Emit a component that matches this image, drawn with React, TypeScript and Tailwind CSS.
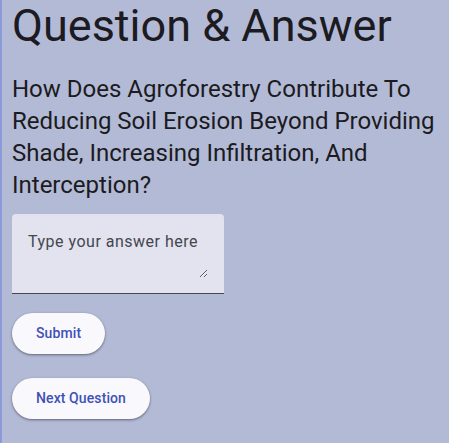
export default function App() {
  return (
    <div
      className="h-[443px] w-[449px] overflow-hidden border-l-2 border-[#8d9ad9] bg-[#b3bad6] pl-[10px] pr-3 text-[#1b1b21]"
      style={{ fontFamily: "Roboto, 'Liberation Sans', sans-serif" }}
    >
      <h1 className="text-[45px] leading-[52px] font-normal">Question &amp; Answer</h1>
      <p className="mt-[21px] text-[24px] leading-[32px]">
        How Does Agroforestry Contribute To Reducing Soil Erosion Beyond Providing
        Shade, Increasing Infiltration, And Interception?
      </p>
      <div className="mt-[13px] w-[212px] rounded-t-[4px] border-b border-[#45464f] bg-[#e2e3ee] px-4 pt-4 pb-[15px]">
        <textarea
          placeholder="Type your answer here"
          rows={2}
          className="block h-12 w-full bg-transparent text-[16px] leading-6 tracking-[0.5px] text-[#1b1b21] outline-none placeholder:text-[#45464f]"
        />
      </div>
      <div className="mt-[19px] flex flex-col items-start gap-[24px]">
        <button className="h-[41px] rounded-full bg-[#f8f8fd] px-6 text-[14px] font-medium tracking-[0.1px] text-[#3f51b5] shadow-[0_1px_3px_rgba(0,0,0,0.3),0_1px_2px_rgba(0,0,0,0.2)]">
          Submit
        </button>
        <button className="h-[41px] rounded-full bg-[#f8f8fd] px-6 text-[14px] font-medium tracking-[0.1px] text-[#3f51b5] shadow-[0_1px_3px_rgba(0,0,0,0.3),0_1px_2px_rgba(0,0,0,0.2)]">
          Next Question
        </button>
      </div>
    </div>
  )
}
